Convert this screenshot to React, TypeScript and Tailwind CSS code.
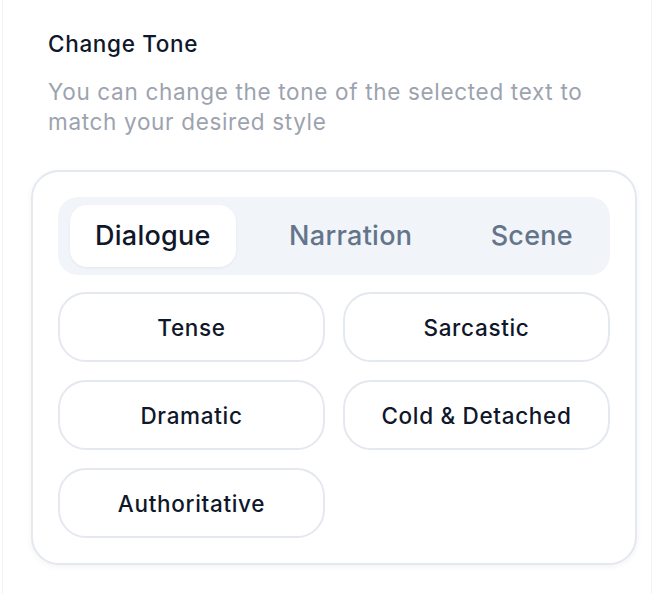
import React, { useState } from 'react';

const tabs = ['Dialogue', 'Narration', 'Scene'];
const tones = ['Tense', 'Sarcastic', 'Dramatic', 'Cold & Detached', 'Authoritative'];

const App: React.FC = () => {
  const [activeTab, setActiveTab] = useState('Dialogue');

  return (
    <div className="min-h-screen bg-white font-['Inter',sans-serif] mx-[2px] border-x border-[#f1f3f6]">
      <div className="pl-[28px] pr-[14px] pt-[29px]">
        {/* Heading */}
        <div className="px-[17px]">
          <h2 className="text-[22.5px] leading-[30px] font-medium tracking-[0.03em] text-[#0f172a]">Change Tone</h2>
          <p className="mt-[18px] text-[22.5px] leading-[30px] tracking-[0.03em] text-[#9ca3af]">
            You can change the tone of the selected text to match your desired style
          </p>
        </div>

        {/* Card */}
        <div className="mt-[33px] rounded-[28px] border-2 border-[#e4e8ef] bg-white p-[25px] shadow-[0_2px_6px_rgba(15,23,42,0.05)]">
          {/* Tabs */}
          <div className="flex items-center justify-between rounded-[20px] bg-[#f1f5f9] px-[12px] py-[8px]">
            {tabs.map((tab) => (
              <button
                key={tab}
                onClick={() => setActiveTab(tab)}
                className={`h-[62px] rounded-[17px] px-[25px] text-[27px] font-medium tracking-[0.01em] ${
                  activeTab === tab
                    ? 'bg-white text-[#0f172a] shadow-[0_1px_3px_rgba(15,23,42,0.06)]'
                    : 'text-[#64748b]'
                }`}
              >
                {tab}
              </button>
            ))}
          </div>

          {/* Tone options */}
          <div className="mt-[17px] grid grid-cols-2 gap-[18px]">
            {tones.map((tone) => (
              <button
                key={tone}
                className="h-[70px] rounded-[28px] border-2 border-[#e4e8ef] bg-white pt-[2px] text-[22.5px] font-medium tracking-[0.03em] text-[#0f172a]"
              >
                {tone}
              </button>
            ))}
          </div>
        </div>
      </div>
    </div>
  );
};

export default App;
